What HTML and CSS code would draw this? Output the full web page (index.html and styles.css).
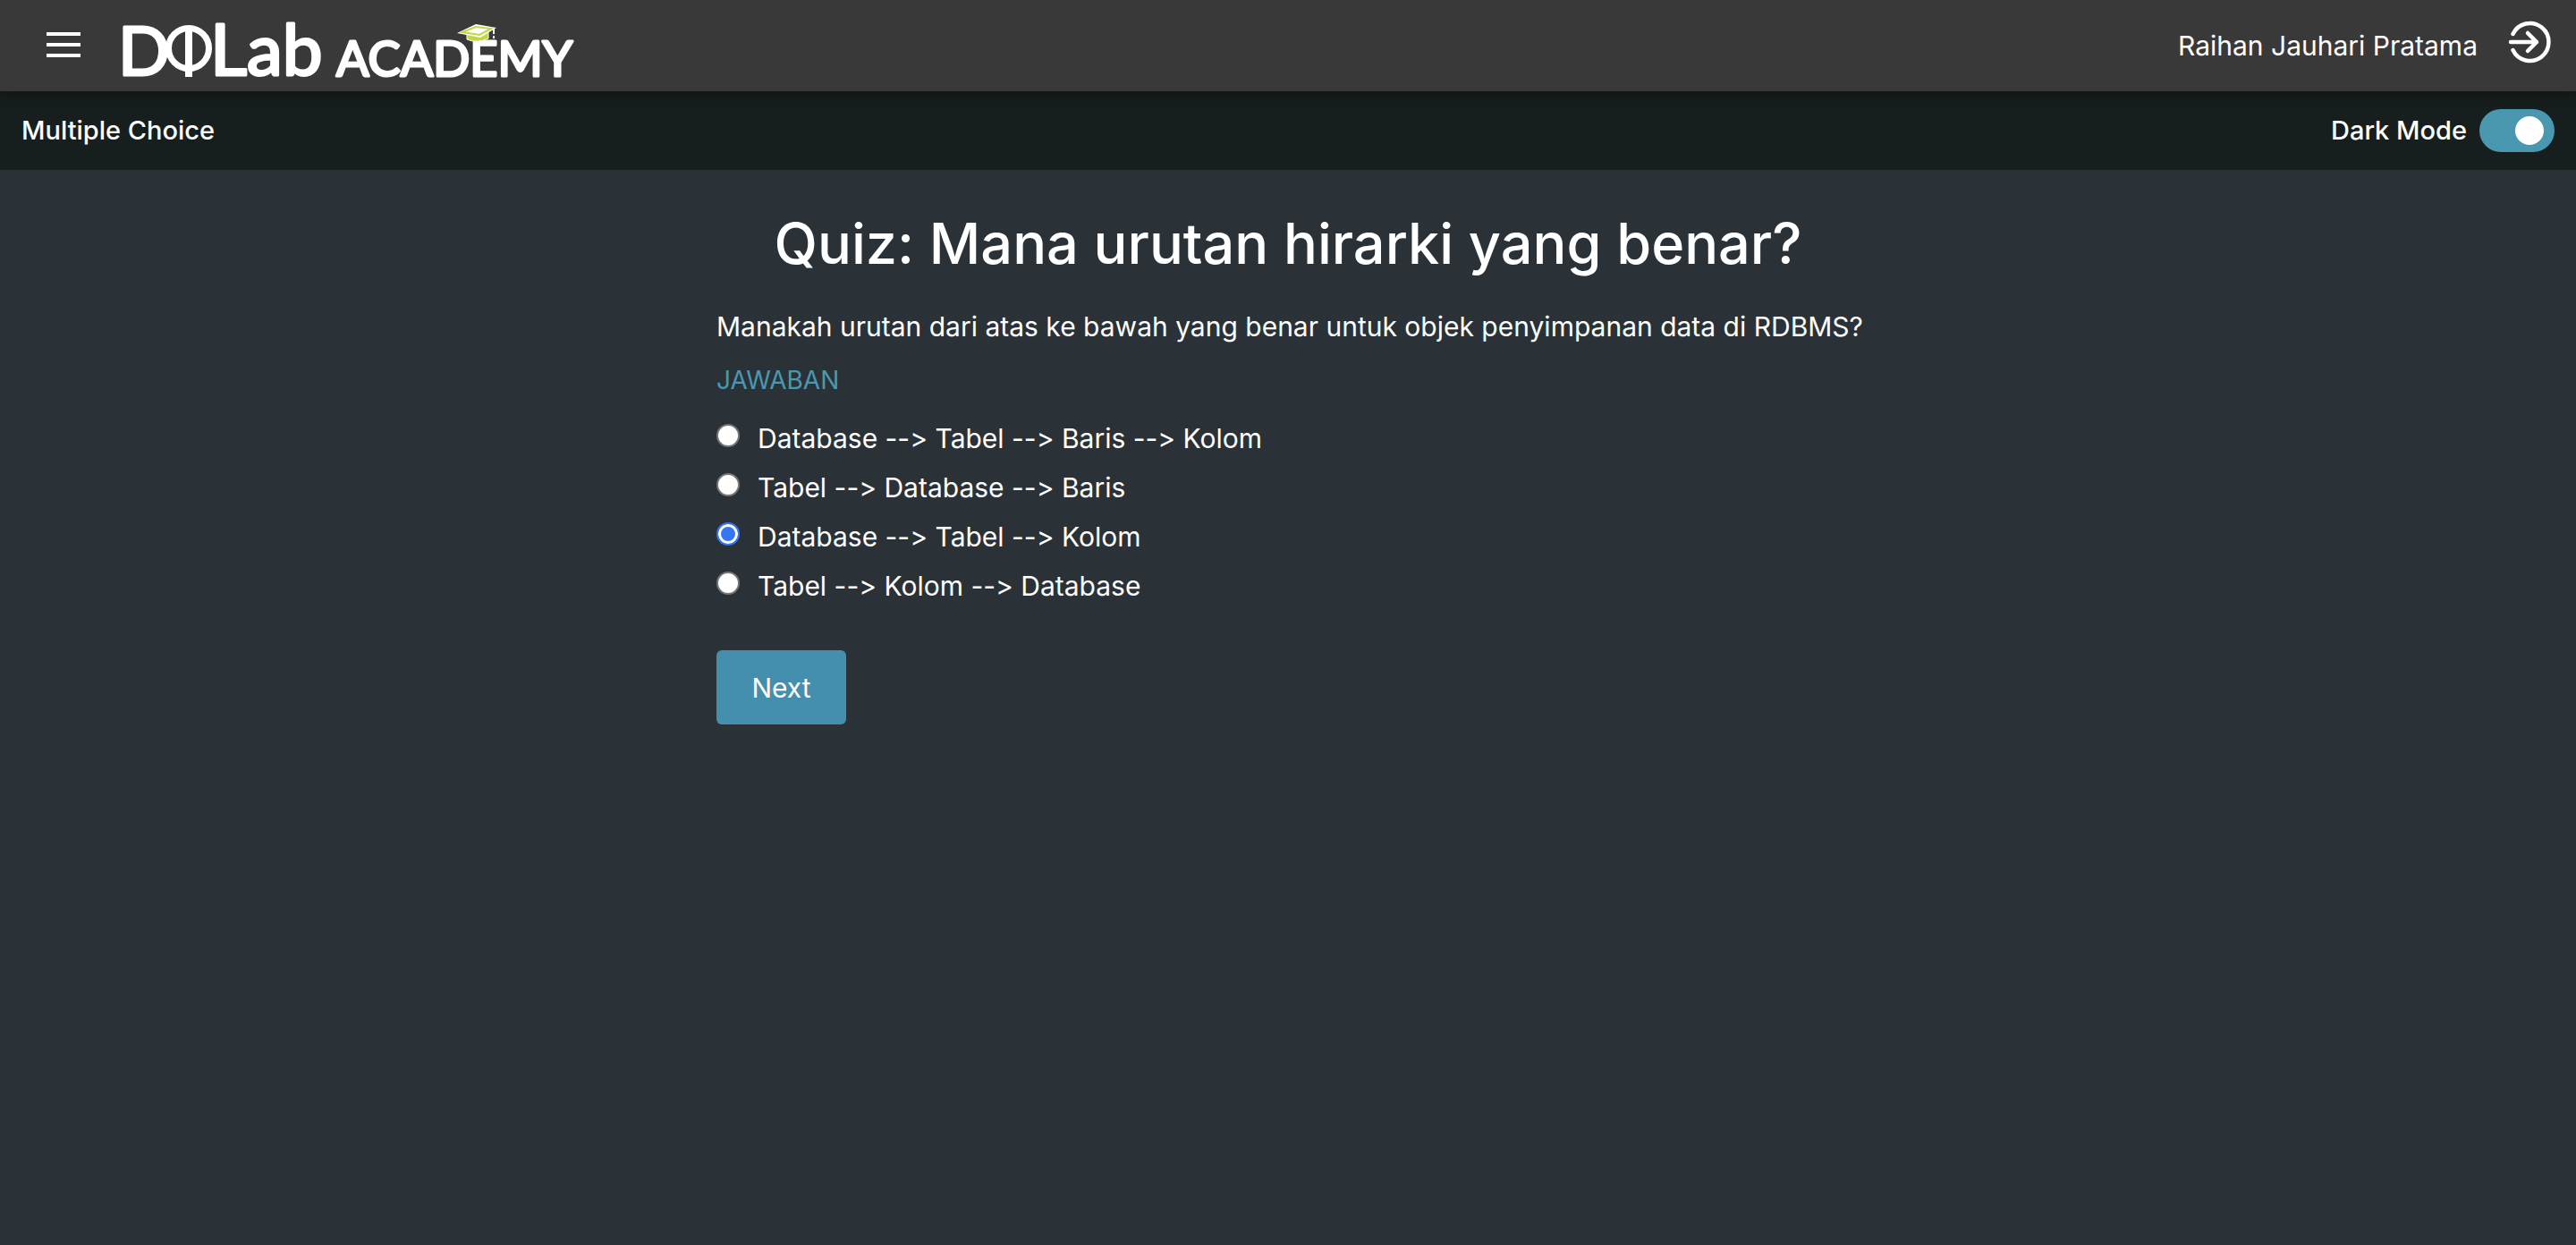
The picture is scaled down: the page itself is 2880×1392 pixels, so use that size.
FILE: index.html
```html
<!DOCTYPE html>
<html lang="id">
<head>
<meta charset="utf-8">
<meta name="viewport" content="width=device-width, initial-scale=1">
<title>DQLab Academy - Multiple Choice</title>
<link rel="stylesheet" href="styles.css">
</head>
<body>
<header class="topbar">
  <div class="topbar-left">
    <button class="menu-button" type="button" aria-label="Menu"><span></span><span></span><span></span></button>
    <a class="logo" href="#" aria-label="DQLab Academy">
      <svg width="530" height="102" viewBox="125 0 530 102" fill="#fff">
        <g font-family="Lato, sans-serif" font-weight="400" stroke="#fff" stroke-width="3" stroke-linejoin="round">
          <text x="132" y="84" font-size="76">D</text>
          <text x="235" y="84" font-size="80">Lab</text>
          <text x="376" y="85" font-size="54">ACADEMY</text>
        </g>
        <circle cx="211" cy="54" r="22.500" fill="#393939" stroke="#fff" stroke-width="7"/>
        <path d="M211 30V86" stroke="#fff" stroke-width="8"/>
        <path d="M522 38V44Q533 49 546 43V36Z" fill="#c5d645" stroke="#fff" stroke-width="1"/>
        <path d="M511 37L532 27L555 31L537 42Z" fill="#fff"/>
        <path d="M517 36L532 30L549 32L536 39Z" fill="none" stroke="#c5d645" stroke-width="2"/>
        <path d="M552 32V43" stroke="#fff" stroke-width="2" stroke-dasharray="6 2"/>
      </svg>
    </a>
  </div>
  <div class="topbar-right">
    <span class="user-name">Raihan Jauhari Pratama</span>
    <button class="exit-button" type="button" aria-label="Logout">
      <svg width="48" height="48" viewBox="0 0 48 48" fill="none" stroke="#fff" stroke-width="4.500" stroke-linecap="round" stroke-linejoin="round">
        <path d="M5.500 15A21 21 0 1 1 5.500 33"/>
        <path d="M3 24H32M22 14L32 24L22 34"/>
      </svg>
    </button>
  </div>
</header>
<div class="subbar">
  <span>Multiple Choice</span>
  <label class="mode">Dark Mode <input class="switch" type="checkbox" role="switch" checked></label>
</div>
<main class="quiz">
  <h1 class="title">Quiz: Mana urutan hirarki yang benar?</h1>
  <p class="question">Manakah urutan dari atas ke bawah yang benar untuk objek penyimpanan data di RDBMS?</p>
  <form>
    <fieldset class="answers">
      <legend>JAWABAN</legend>
      <label><input type="radio" name="answer"><span>Database --&gt; Tabel --&gt; Baris --&gt; Kolom</span></label>
      <label><input type="radio" name="answer"><span>Tabel --&gt; Database --&gt; Baris</span></label>
      <label><input type="radio" name="answer" checked><span>Database --&gt; Tabel --&gt; Kolom</span></label>
      <label><input type="radio" name="answer"><span>Tabel --&gt; Kolom --&gt; Database</span></label>
    </fieldset>
    <button class="next" type="submit">Next</button>
  </form>
</main>
</body>
</html>
```

FILE: styles.css
```css
* { box-sizing: border-box; }

body {
  margin: 0;
  min-height: 100vh;
  background: #2a3238;
  color: #fff;
  font: 400 30px/42px Inter, sans-serif;
  font-variant-ligatures: none;
  font-feature-settings: "calt" 0;
}

button { border: 0; padding: 0; background: none; color: inherit; font: inherit; cursor: pointer; }

.topbar {
  position: relative;
  display: flex;
  justify-content: space-between;
  align-items: center;
  height: 102px;
  padding: 0 28px 0 52px;
  background: #393939;
  box-shadow: 0 4px 16px rgba(0, 0, 0, 0.4);
}

.topbar-left { display: flex; align-items: center; gap: 35px; }
.menu-button { display: flex; flex-direction: column; gap: 8px; width: 38px; padding-bottom: 2px; }
.menu-button span { height: 4px; background: #fff; }
.logo, .logo svg { display: block; }

.topbar-right { display: flex; align-items: center; gap: 34px; }
.exit-button { padding-bottom: 8px; }
.exit-button svg { display: block; }

.subbar {
  display: flex;
  justify-content: space-between;
  align-items: center;
  height: 88px;
  padding: 0 24px;
  background: #171f1e;
  font-size: 29px;
  font-weight: 500;
}

.mode { display: flex; align-items: center; gap: 14px; }

.switch {
  appearance: none;
  display: flex;
  align-items: center;
  width: 84px;
  height: 48px;
  margin: 0;
  padding: 0 12px;
  border-radius: 24px;
  background: #868e96;
}
.switch::before { content: ""; width: 32px; height: 32px; border-radius: 50%; background: #fff; }
.switch:checked { justify-content: flex-end; background: #4a98b0; }

.quiz { max-width: 1278px; margin: 0 auto; padding-top: 46px; }
.title { margin: 0; font-size: 63px; line-height: 72px; font-weight: 500; text-align: center; }
.question { margin: 36px -12px 18px 0; }

.answers { margin: 0; padding: 0; border: 0; min-width: 0; }
.answers legend { padding: 0; margin-bottom: 16px; color: #4a98b0; font-size: 28px; }
.answers label { display: flex; align-items: flex-start; gap: 20px; height: 55px; padding-top: 7px; }
.answers input {
  appearance: none;
  flex: none;
  width: 26px;
  height: 26px;
  margin: 5px 0 0;
  border: 2px solid #767676;
  border-radius: 50%;
  background: #fff;
}
.answers input:checked {
  border-color: #3575f6;
  background: #3575f6;
  box-shadow: inset 0 0 0 3px #fff;
}

.next {
  width: 145px;
  height: 83px;
  margin-top: 45px;
  border-radius: 6px;
  background: #448fae;
}
```
